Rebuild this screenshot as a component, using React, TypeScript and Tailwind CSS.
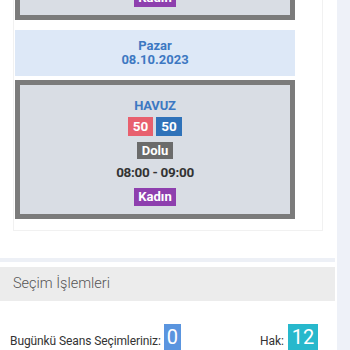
import React from "react";

function SessionBox({ className = "" }: { className?: string }) {
  return (
    <div
      className={`w-[280px] h-[139px] border-[5px] border-[#7b7b7b] bg-[#d9dde4] flex flex-col items-center pt-[13px] ${className}`}
    >
      <div className="text-[13px] font-bold text-[#3d78c2] leading-[16px] tracking-[-0.2px]">HAVUZ</div>
      <div className="flex gap-[3px] mt-[3px]">
        <span className="bg-[#e8606e] text-white text-[13.5px] font-bold w-[25px] h-[19px] flex items-center justify-center">50</span>
        <span className="bg-[#2f72b9] text-white text-[13.5px] font-bold w-[26px] h-[19px] flex items-center justify-center">50</span>
      </div>
      <span className="mt-[6px] bg-[#6b6b6b] text-white text-[13px] font-bold w-[36px] h-[17px] flex items-center justify-center">Dolu</span>
      <div className="mt-[5px] text-[13.5px] font-bold text-[#333] leading-[17px] tracking-[-0.3px]">08:00 - 09:00</div>
      <span className="mt-[7px] bg-[#8e3fae] text-white text-[13px] font-bold w-[42px] h-[18px] flex items-center justify-center">Kadın</span>
    </div>
  );
}

export default function App() {
  return (
    <div className="w-[350px] h-[350px] overflow-hidden bg-white flex" style={{ fontFamily: "Roboto, 'Liberation Sans', sans-serif" }}>
      <div className="w-[337px] flex flex-col">
        <div className="ml-[13px] w-[310px] h-[232px] border-l border-r border-b border-[#f1f1f1] pl-[1px] flex flex-col overflow-hidden">
          <SessionBox className="mt-[-119px] shrink-0" />
          <div className="mt-[10px] w-[280px] h-[46px] bg-[#dde8f7] flex flex-col items-center justify-center text-[13px] font-bold text-[#3d78c2] leading-[14px]">
            <div>Pazar</div>
            <div>08.10.2023</div>
          </div>
          <SessionBox className="mt-[4px] shrink-0" />
        </div>
        <div className="mt-[27px] w-[335px] h-[4px] bg-[#edf0f6]" />
        <div className="mt-[5px] w-[335px] h-[34px] bg-[#ececec] flex items-center pl-[13px] text-[14.5px] font-light text-[#555]">
          Seçim İşlemleri
        </div>
        <div className="mt-[23px] flex items-start pl-[10px] w-[335px]">
          <span className="text-[12px] text-[#333] mt-[8px] tracking-[-0.1px]">Bugünkü Seans Seçimleriniz:</span>
          <span className="ml-[3px] bg-[#5a95df] text-white text-[20px] w-[17px] h-[26px] flex items-center justify-center">0</span>
          <span className="ml-auto text-[12px] text-[#333] mt-[8px]">Hak:</span>
          <span className="ml-[4px] mr-[17px] bg-[#27b8cc] text-white text-[20px] w-[30px] h-[26px] flex items-center justify-center">12</span>
        </div>
      </div>
      <div className="w-[13px] h-full bg-[#eef1f8]" />
    </div>
  );
}
